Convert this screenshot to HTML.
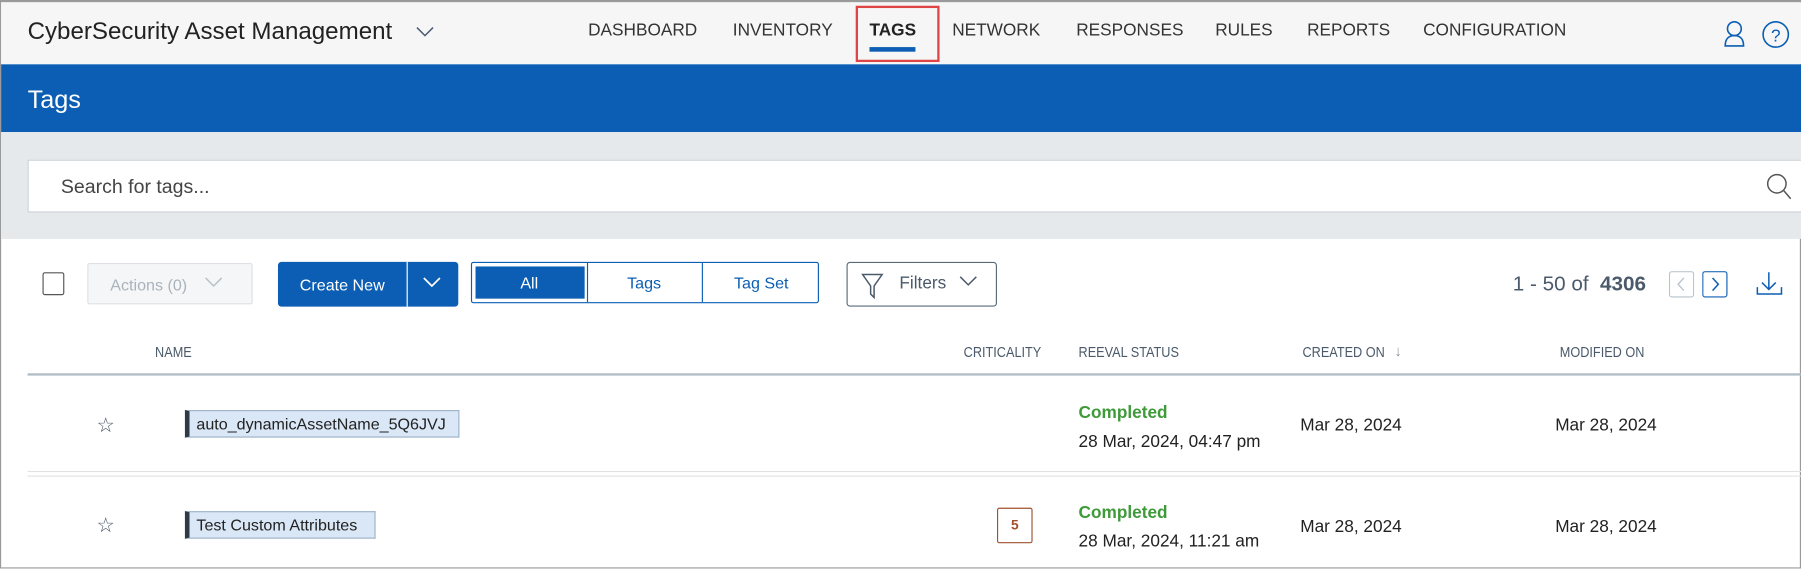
<!DOCTYPE html>
<html><head><meta charset="utf-8"><style>
*{margin:0;padding:0;box-sizing:border-box}
html,body{width:1801px;height:569px;overflow:hidden;background:#fff}
#w{position:absolute;left:0;top:0;width:1568px;height:495px;transform:scale(1.1486);transform-origin:0 0;font-family:"Liberation Sans",sans-serif;color:#222;border:1px solid #9a9a9a;border-top-width:2px}
.a{position:absolute;white-space:nowrap}
.nav{top:16px;font-size:15px;color:#333}
.hd{top:297px;font-size:13px;color:#4a5a6a;transform:scaleX(.85);transform-origin:0 0}
.chip{background:#dae7f6;border:1px solid #9fb3c8;border-left:4px solid #2e3a44;font-size:14px;padding:0 6px;height:24px;line-height:22px;color:#222}
.g{color:#3f9a3a;font-size:15px;font-weight:bold}
.d{font-size:15px;color:#222}
</style></head><body><div id="w">
<div class="a" style="left:0;top:0;width:1568px;height:54px;background:#f6f6f6"></div>
<div class="a" style="left:23px;top:14px;font-size:21px;color:#222">CyberSecurity Asset Management</div>
<svg class="a" style="left:360px;top:20px" width="18" height="12"><path d="M2 2l7 7 7-7" fill="none" stroke="#4a5a70" stroke-width="1.3"/></svg>
<div class="a nav" style="left:511px">DASHBOARD</div>
<div class="a nav" style="left:637px">INVENTORY</div>
<div class="a nav" style="left:756px;font-weight:bold;color:#222">TAGS</div>
<div class="a" style="left:756px;top:39px;width:40px;height:4px;background:#0b5eb3"></div>
<div class="a" style="left:744px;top:3px;width:73px;height:49px;border:2px solid #e04545"></div>
<div class="a nav" style="left:828px">NETWORK</div>
<div class="a nav" style="left:936px">RESPONSES</div>
<div class="a nav" style="left:1057px">RULES</div>
<div class="a nav" style="left:1137px">REPORTS</div>
<div class="a nav" style="left:1238px">CONFIGURATION</div>
<svg class="a" style="left:1498px;top:15px" width="24" height="26"><circle cx="11" cy="8" r="6" fill="none" stroke="#0b5eb3" stroke-width="1.4"/><path d="M3 23c0-7 4-9 8-9s8 2 8 9z" fill="none" stroke="#0b5eb3" stroke-width="1.4"/></svg>
<svg class="a" style="left:1532px;top:15px" width="26" height="26"><circle cx="13" cy="13" r="11" fill="none" stroke="#0b5eb3" stroke-width="1.4"/><text x="13" y="19" font-size="15" text-anchor="middle" fill="#0b5eb3" font-family="Liberation Sans">?</text></svg>
<div class="a" style="left:0;top:54px;width:1568px;height:59px;background:#0b5eb3"></div>
<div class="a" style="left:23px;top:72px;font-size:22px;color:#fff">Tags</div>
<div class="a" style="left:0;top:113px;width:1568px;height:93px;background:#e5e9ec"></div>
<div class="a" style="left:23px;top:137px;width:1545px;height:46px;background:#fff;border:1px solid #cdd3d8;border-right:none"></div>
<div class="a" style="left:52px;top:151px;font-size:17px;color:#444">Search for tags...</div>
<svg class="a" style="left:1536px;top:148px" width="24" height="26"><circle cx="10" cy="10" r="8" fill="none" stroke="#555" stroke-width="1.3"/><path d="M16 16l6 7" stroke="#555" stroke-width="1.3"/></svg>
<div class="a" style="left:36px;top:235px;width:19px;height:20px;border:1px solid #555;border-radius:2px"></div>
<div class="a" style="left:75px;top:227px;width:144px;height:36px;background:#f5f6f7;border:1px solid #dde1e5;border-radius:2px"></div>
<div class="a" style="left:95px;top:238px;font-size:14px;color:#aab3bc">Actions (0)</div>
<svg class="a" style="left:176px;top:238px" width="18" height="12"><path d="M2 2l7 7 7-7" fill="none" stroke="#b8c0c8" stroke-width="1.3"/></svg>
<div class="a" style="left:241px;top:226px;width:157px;height:39px;background:#0b5eb3;border-radius:3px"></div>
<div class="a" style="left:353px;top:226px;width:1px;height:39px;background:#fff"></div>
<div class="a" style="left:260px;top:238px;font-size:14px;color:#fff">Create New</div>
<svg class="a" style="left:366px;top:238px" width="18" height="12"><path d="M2 2l7 7 7-7" fill="none" stroke="#fff" stroke-width="1.5"/></svg>
<div class="a" style="left:409px;top:226px;width:303px;height:36px;border:1px solid #0b5eb3;border-radius:2px"></div>
<div class="a" style="left:413px;top:230px;width:95px;height:28px;background:#0b5eb3"></div>
<div class="a" style="left:510px;top:227px;width:1px;height:34px;background:#0b5eb3"></div>
<div class="a" style="left:610px;top:227px;width:1px;height:34px;background:#0b5eb3"></div>
<div class="a" style="left:452px;top:236px;font-size:14px;color:#fff">All</div>
<div class="a" style="left:545px;top:236px;font-size:14px;color:#0b5eb3">Tags</div>
<div class="a" style="left:638px;top:236px;font-size:14px;color:#0b5eb3">Tag Set</div>
<div class="a" style="left:736px;top:226px;width:131px;height:39px;border:1px solid #5a6b7c;border-radius:3px"></div>
<svg class="a" style="left:748px;top:234px" width="22" height="26"><path d="M2 3h17l-7 10v10l-3-3v-7z" fill="none" stroke="#4a5a6a" stroke-width="1.3"/></svg>
<div class="a" style="left:782px;top:236px;font-size:15px;color:#4a5a6a">Filters</div>
<svg class="a" style="left:833px;top:237px" width="18" height="12"><path d="M2 2l7 7 7-7" fill="none" stroke="#4a5a6a" stroke-width="1.3"/></svg>
<div class="a" style="left:1316px;top:235px;font-size:18px;color:#4a5a6a">1 - 50 of &nbsp;<b>4306</b></div>
<svg class="a" style="left:1452px;top:234px" width="22" height="23"><rect x=".5" y=".5" width="21" height="22" rx="2" fill="none" stroke="#b9c3cc"/><path d="M13 6l-5 5.5 5 5.5" fill="none" stroke="#b9c3cc" stroke-width="1.2"/></svg>
<svg class="a" style="left:1481px;top:234px" width="22" height="23"><rect x=".5" y=".5" width="21" height="22" rx="2" fill="none" stroke="#0b5eb3"/><path d="M9 6l5 5.5-5 5.5" fill="none" stroke="#0b5eb3" stroke-width="1.3"/></svg>
<svg class="a" style="left:1527px;top:233px" width="26" height="24"><path d="M12 2v15M6 11l6 6 6-6M2 15v6h21v-6" fill="none" stroke="#0b5eb3" stroke-width="1.3"/></svg>
<div class="a hd" style="left:134px">NAME</div>
<div class="a hd" style="left:838px">CRITICALITY</div>
<div class="a hd" style="left:938px">REEVAL STATUS</div>
<div class="a hd" style="left:1133px">CREATED ON</div>
<div class="a" style="left:1213px;top:296px;font-size:13px;color:#8a95a0">&darr;</div>
<div class="a hd" style="left:1357px">MODIFIED ON</div>
<div class="a" style="left:23px;top:323px;width:1545px;height:2px;background:#b0bcc4"></div>
<div class="a" style="left:83px;top:358px;font-size:18px;color:#4a5a6a">&#9734;</div>
<div class="a chip" style="left:160px;top:355px;width:239px">auto_dynamicAssetName_5Q6JVJ</div>
<div class="a g" style="left:938px;top:349px">Completed</div>
<div class="a d" style="left:938px;top:374px">28 Mar, 2024, 04:47 pm</div>
<div class="a d" style="left:1131px;top:360px">Mar 28, 2024</div>
<div class="a d" style="left:1353px;top:360px">Mar 28, 2024</div>
<div class="a" style="left:23px;top:408px;width:1545px;height:1px;background:#e2e2e2"></div>
<div class="a" style="left:23px;top:412px;width:1545px;height:1px;background:#e2e2e2"></div>
<div class="a" style="left:83px;top:445px;font-size:18px;color:#4a5a6a">&#9734;</div>
<div class="a chip" style="left:160px;top:443px;width:166px">Test Custom Attributes</div>
<div class="a" style="left:867px;top:440px;width:31px;height:31px;border:1px solid #a0522d;border-radius:2px;color:#a0522d;font-size:12px;font-weight:bold;text-align:center;line-height:29px">5</div>
<div class="a g" style="left:938px;top:436px">Completed</div>
<div class="a d" style="left:938px;top:461px">28 Mar, 2024, 11:21 am</div>
<div class="a d" style="left:1131px;top:448px">Mar 28, 2024</div>
<div class="a d" style="left:1353px;top:448px">Mar 28, 2024</div>
</div></body></html>
